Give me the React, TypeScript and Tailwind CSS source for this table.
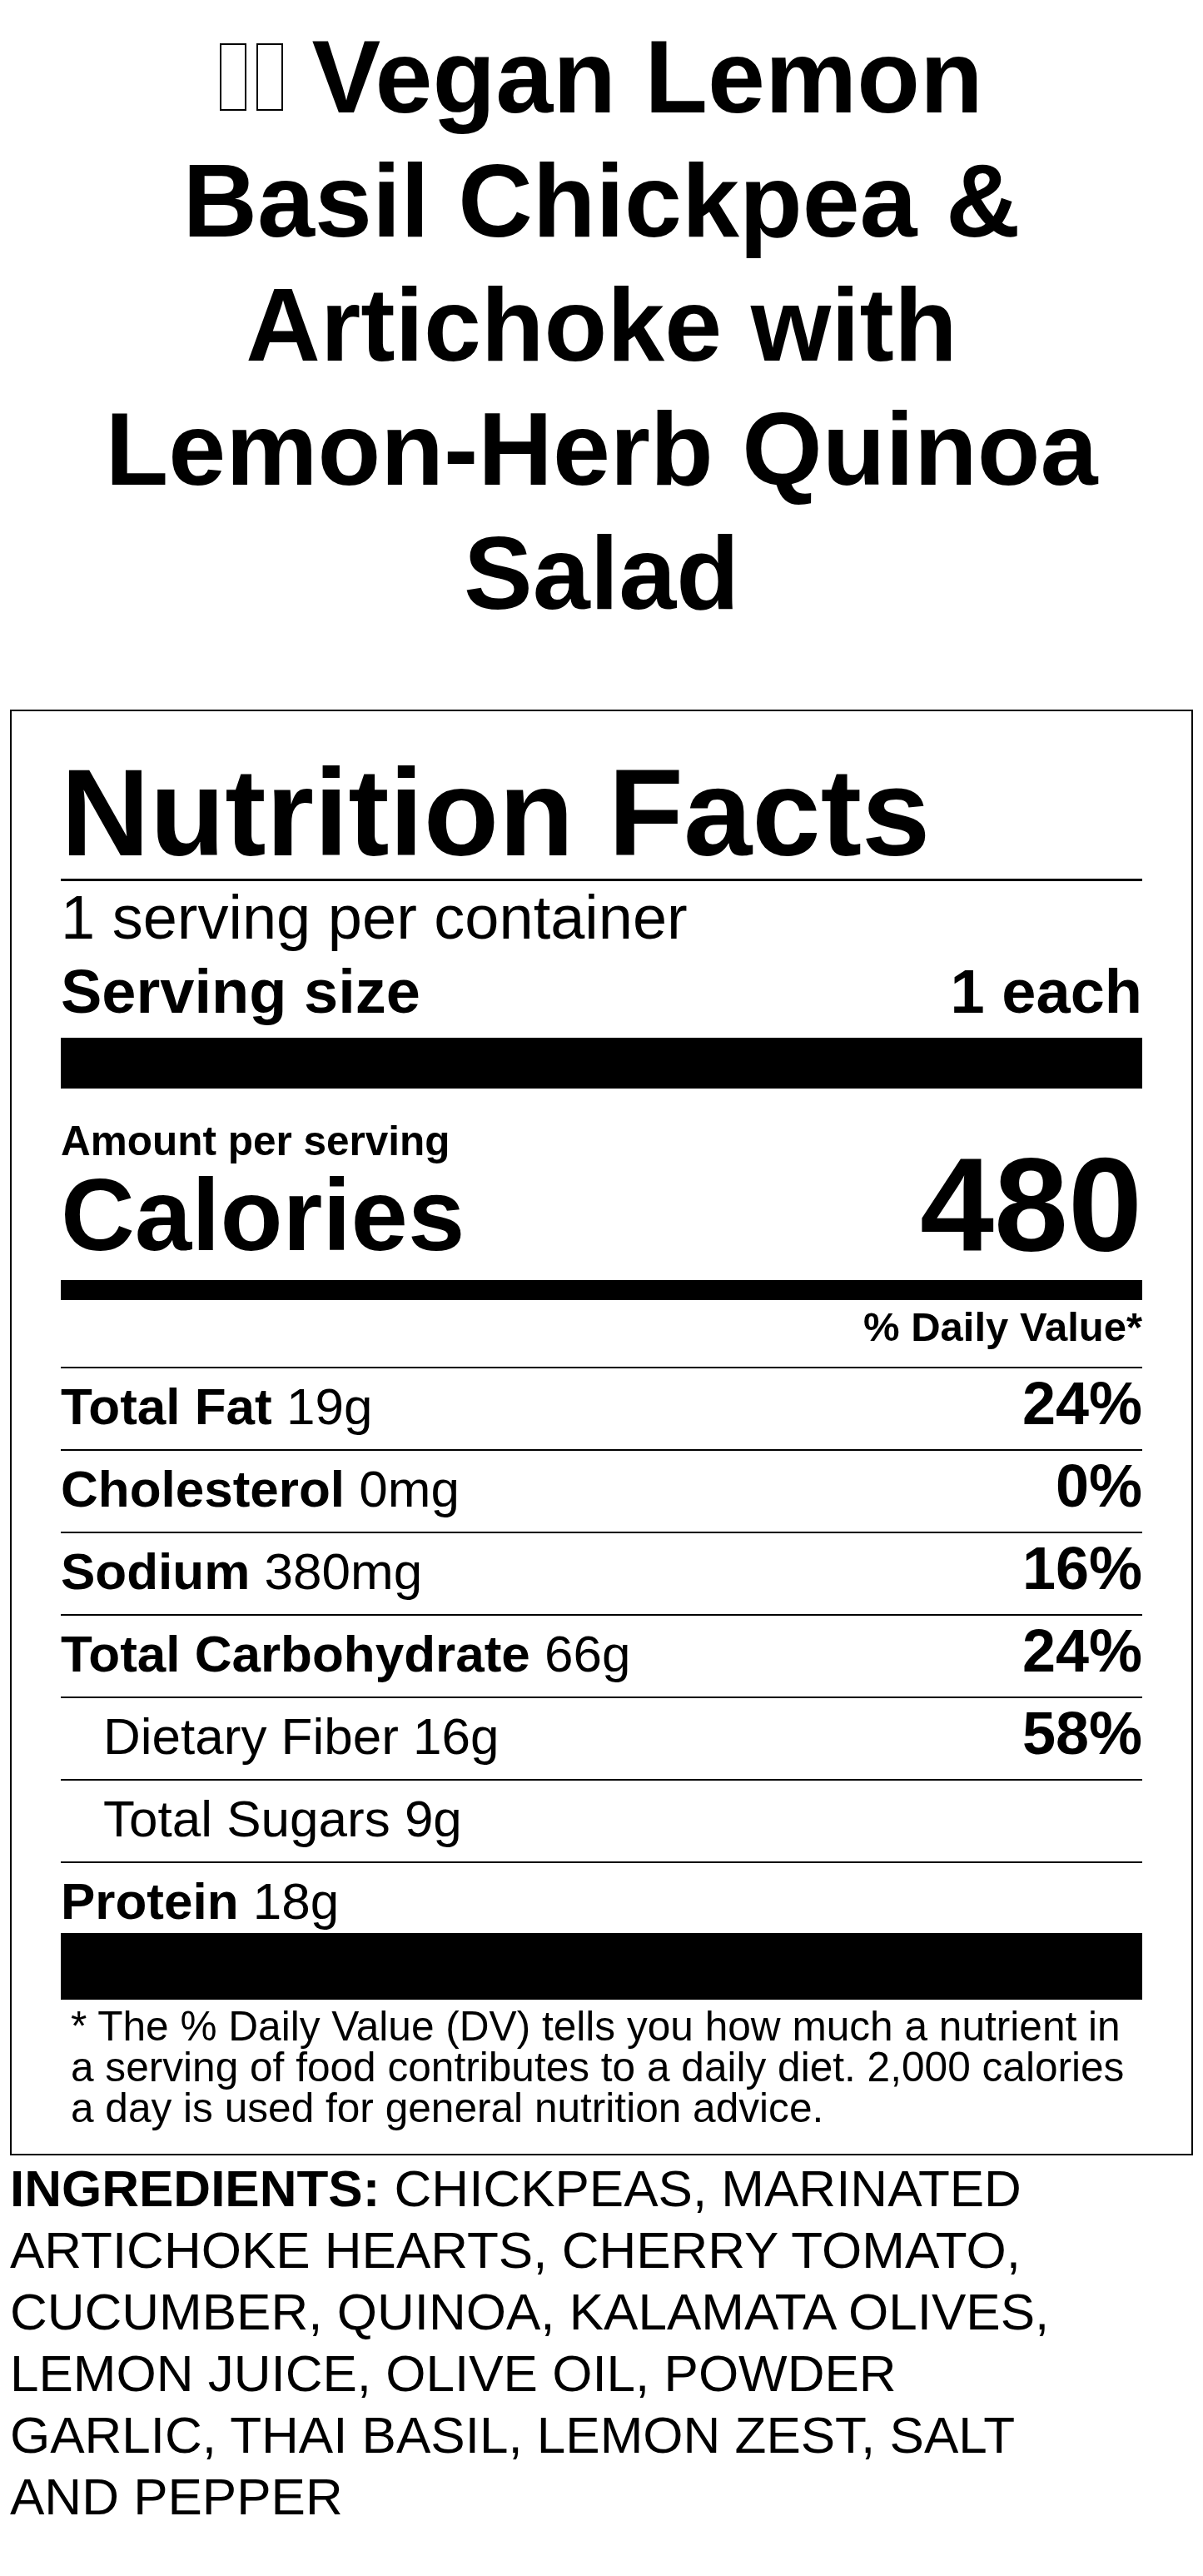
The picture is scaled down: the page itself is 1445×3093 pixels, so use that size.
import React from 'react';

interface Nutrient {
  label: string;
  amount: string;
  dv?: string;
  indent?: boolean;
}

const nutrients: Nutrient[] = [
  { label: 'Total Fat', amount: '19g', dv: '24%' },
  { label: 'Cholesterol', amount: '0mg', dv: '0%' },
  { label: 'Sodium', amount: '380mg', dv: '16%' },
  { label: 'Total Carbohydrate', amount: '66g', dv: '24%' },
  { label: 'Dietary Fiber', amount: '16g', dv: '58%', indent: true },
  { label: 'Total Sugars', amount: '9g', indent: true },
  { label: 'Protein', amount: '18g' },
];

function NutrientRow({ item, last }: { item: Nutrient; last: boolean }) {
  return (
    <div
      className={`flex items-baseline justify-between border-t-2 border-black leading-[84px] ${
        last ? 'h-[86px]' : 'h-[99px]'
      }`}
    >
      <span className={`text-[62px] ${item.indent ? 'pl-[51px]' : ''}`}>
        {item.indent ? (
          <>
            {item.label} {item.amount}
          </>
        ) : (
          <>
            <b>{item.label}</b> {item.amount}
          </>
        )}
      </span>
      <span className="text-[72px] font-bold">{item.dv ?? '\u00a0'}</span>
    </div>
  );
}

// the emoji in the title shows as two missing-glyph boxes
function Tofu() {
  return <span className="mb-[2px] inline-block h-[81px] w-[32px] border-2 border-black align-baseline" />;
}

export default function App() {
  return (
    <div className="min-h-screen bg-white text-black font-['Liberation_Sans',Arial,sans-serif] px-3 pb-[58px]">
      <h1 className="mx-auto w-[1220px] pt-[18px] text-center text-[124px] font-bold leading-[149px]">
        <Tofu />
        <span className="ml-[12px]" />
        <Tofu /> Vegan Lemon Basil Chickpea &amp; Artichoke with Lemon-Herb Quinoa Salad
      </h1>

      <div className="mt-[89px] border-2 border-black px-[59px] pt-[48px] pb-[30px]">
        <div className="border-b-[3px] border-black pb-[5px] text-[148px] font-bold leading-none">
          Nutrition Facts
        </div>
        <div className="text-[74px] leading-[1.2]">1 serving per container</div>
        <div className="flex justify-between text-[74px] font-bold leading-[1.2]">
          <span>Serving size</span>
          <span>1 each</span>
        </div>
        <div className="mt-[10px] h-[61px] bg-black" />

        <div className="mt-[37px] flex items-end justify-between">
          <div>
            <div className="text-[49.5px] font-bold leading-[1.07]">Amount per serving</div>
            <div className="text-[123px] font-bold leading-none">Calories</div>
          </div>
          <div className="text-[160px] font-bold leading-[0.92]">480</div>
        </div>
        <div className="mt-[17px] h-[24px] bg-black" />

        <div className="pt-[3px] pb-[19px] text-right text-[49px] font-bold leading-[58px]">
          % Daily Value*
        </div>

        {nutrients.map((n, i) => (
          <NutrientRow key={n.label} item={n} last={i === nutrients.length - 1} />
        ))}

        <div className="h-[80px] bg-black" />
        <p className="mt-[8px] pl-[12px] text-[49.6px] leading-[49px]">
          * The % Daily Value (DV) tells you how much a nutrient in a serving of food contributes to a
          daily diet. 2,000 calories a day is used for general nutrition advice.
        </p>
      </div>

      <p className="mt-[3px] w-[1290px] text-[62px] leading-[74px]">
        <b>INGREDIENTS:</b> CHICKPEAS, MARINATED ARTICHOKE HEARTS, CHERRY TOMATO, CUCUMBER, QUINOA,
        KALAMATA OLIVES, LEMON JUICE, OLIVE OIL, POWDER GARLIC, THAI BASIL, LEMON ZEST, SALT AND
        PEPPER
      </p>
    </div>
  );
}
